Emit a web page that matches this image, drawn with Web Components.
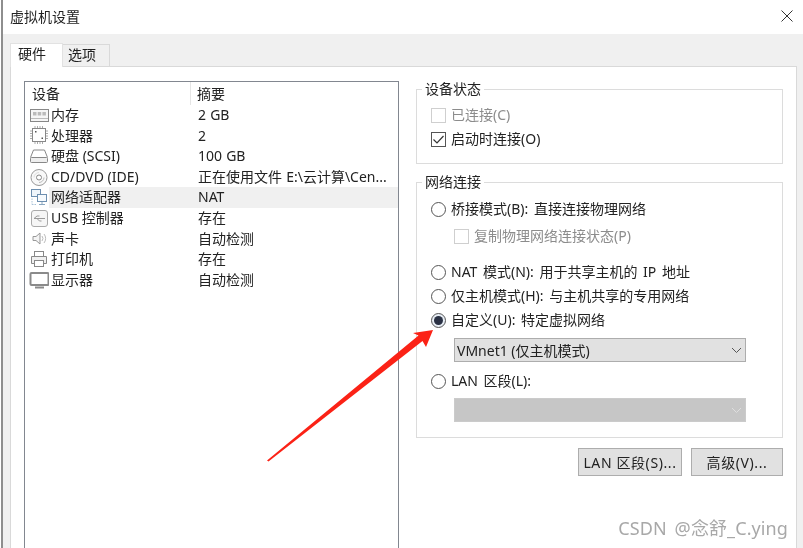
<!DOCTYPE html>
<html lang="zh">
<head>
<meta charset="utf-8">
<title>虚拟机设置</title>
<style>
    html, body { margin: 0; padding: 0; background: #fff; }
    body { font: 14px "Noto Sans", "Noto Sans CJK SC", sans-serif; color: #222; overflow: hidden; }
    .gap-3 { margin-top: 3px; }
    .gap-4 { margin-top: 4px; }
    .gap-5 { margin-top: 5px; }
    .gap-6 { margin-top: 6px; }
    .gap-7 { margin-top: 7px; }
    .gap-12 { margin-top: 12px; }
    .indent { margin-left: 23px; }
</style>
</head>
<body>
<settings-dialog heading="虚拟机设置">
    <device-list slot="left">
        <device-row icon="memory" name="内存" summary="2 GB"></device-row>
        <device-row icon="cpu" name="处理器" summary="2"></device-row>
        <device-row icon="disk" name="硬盘 (SCSI)" summary="100 GB"></device-row>
        <device-row icon="cd" name="CD/DVD (IDE)" summary="正在使用文件 E:\云计算\Cen..."></device-row>
        <device-row icon="net" name="网络适配器" summary="NAT" selected></device-row>
        <device-row icon="usb" name="USB 控制器" summary="存在"></device-row>
        <device-row icon="sound" name="声卡" summary="自动检测"></device-row>
        <device-row icon="printer" name="打印机" summary="存在"></device-row>
        <device-row icon="display" name="显示器" summary="自动检测"></device-row>
    </device-list>

    <option-group slot="right" label="设备状态" style="margin-top:8px; padding-bottom:12px">
        <option-row class="gap-3" type="check" disabled>已连接(C)</option-row>
        <option-row type="check" checked>启动时连接(O)</option-row>
    </option-group>

    <option-group slot="right" label="网络连接" style="margin-top:18px; padding-bottom:15px">
        <option-row class="gap-4" type="radio">桥接模式(B): 直接连接物理网络</option-row>
        <option-row class="gap-3 indent" type="check" disabled>复制物理网络连接状态(P)</option-row>
        <option-row class="gap-12" type="radio">NAT 模式(N): 用于共享主机的 IP 地址</option-row>
        <option-row type="radio">仅主机模式(H): 与主机共享的专用网络</option-row>
        <option-row type="radio" checked>自定义(U): 特定虚拟网络</option-row>
        <combo-box class="gap-6 indent">VMnet1 (仅主机模式)</combo-box>
        <option-row class="gap-7" type="radio">LAN 区段(L):</option-row>
        <combo-box class="gap-5 indent" disabled></combo-box>
    </option-group>

    <button-row slot="right">
        <push-button style="width:104px">LAN 区段(S)...</push-button>
        <push-button style="width:92px">高级(V)...</push-button>
    </button-row>

    <annotation-arrow slot="overlay"></annotation-arrow>
    <water-mark slot="overlay">CSDN @念舒_C.ying</water-mark>
</settings-dialog>

<script>
class SettingsDialog extends HTMLElement {
    constructor() {
        super();
        this.attachShadow({ mode: 'open' });
        this.shadowRoot.innerHTML = `
            <style>
                :host {
                    display: flex;
                    flex-direction: column;
                    position: relative;
                    width: 802px;
                    height: 548px;
                    margin-left: 1px;
                    border-left: 2px solid #8e8e8e;
                    box-sizing: border-box;
                    overflow: hidden;
                    background: #fff;
                    filter: blur(.35px);
                }
                .titlebar {
                    display: flex;
                    align-items: center;
                    justify-content: space-between;
                    height: 32px;
                    padding: 0 10px 2px 7px;
                    flex: none;
                }
                .titlebar svg { display: block; }
                .body {
                    flex: 1;
                    min-height: 0;
                    display: flex;
                    flex-direction: column;
                    background: #f0f0f0;
                    padding: 9px 6px 0 7px;
                }
                .tabs { display: flex; align-items: flex-end; height: 23px; flex: none; }
                .tab {
                    box-sizing: border-box;
                    border: 1px solid #d9d9d9;
                    border-bottom: none;
                }
                .tab.on {
                    width: 53px;
                    height: 24px;
                    line-height: 19px;
                    padding-left: 7px;
                    background: #fff;
                    margin-bottom: -1px;
                    position: relative;
                    border-color: #e2e2e2;
                }
                .tab.off {
                    width: 48px;
                    height: 22px;
                    line-height: 20px;
                    padding-left: 5px;
                    margin-left: -1px;
                    background: #f0f0f0;
                }
                .panel {
                    flex: 1;
                    min-height: 0;
                    display: flex;
                    gap: 17px;
                    padding: 14px 13px 0 13px;
                    background: #fff;
                    border: 1px solid #d9d9d9;
                    border-bottom: none;
                }
                .left { display: block; width: 375px; flex: none; }
                .right { display: flex; flex-direction: column; width: 367px; flex: none; }
            </style>
            <div class="titlebar">
                <span class="heading"></span>
                <svg width="12" height="12" viewBox="0 0 12 12"><path d="M.5.5l11 11M11.5.5l-11 11" stroke="#333" stroke-width="1" fill="none"/></svg>
            </div>
            <div class="body">
                <div class="tabs">
                    <div class="tab on">硬件</div>
                    <div class="tab off">选项</div>
                </div>
                <div class="panel">
                    <div class="left"><slot name="left"></slot></div>
                    <div class="right"><slot name="right"></slot></div>
                </div>
            </div>
            <slot name="overlay"></slot>
        `;
    }

    connectedCallback() {
        this.shadowRoot.querySelector('.heading').textContent = this.getAttribute('heading');
    }
}

class DeviceList extends HTMLElement {
    constructor() {
        super();
        this.attachShadow({ mode: 'open' });
        this.shadowRoot.innerHTML = `
            <style>
                :host {
                    display: block;
                    height: 100%;
                    box-sizing: border-box;
                    border: 1px solid #828790;
                    border-bottom: none;
                    background: #fff;
                }
                .head { display: grid; grid-template-columns: 166px 1fr; height: 23px; line-height: 23px; }
                .head span:first-child { padding-left: 7px; border-right: 1px solid #e5e5e5; }
                .head span:last-child { padding-left: 6px; }
            </style>
            <div class="head"><span>设备</span><span>摘要</span></div>
            <slot></slot>
        `;
    }
}

const DEVICE_ICONS = {
    memory: `<rect x="1.500" y="3.500" width="18" height="12" fill="#f6f6f6" stroke="#888"/><path d="M4 6h3.500v3.500H4zM8.700 6h3.500v3.500H8.700zM13.400 6h3.500v3.500h-3.500z" fill="#bbb"/><path d="M2 12.500h17" stroke="#bbb"/>`,
    cpu: `<rect x="3.500" y="2.500" width="13" height="13" fill="#fff" stroke="#888"/><path d="M6 0v2M8.500 0v2M11 0v2M13.500 0v2M6 16v2M8.500 16v2M11 16v2M13.500 16v2M1 5h2M1 7.500h2M1 10h2M1 12.500h2M17 5h2M17 7.500h2M17 10h2M17 12.500h2" stroke="#aaa"/><path d="M6 5h1.500v1.500H6zM12.500 11.500H14V13h-1.500z" fill="#555"/>`,
    disk: `<path d="M1.500 10.500l3-7.500h11l3 7.500" fill="#fff" stroke="#888"/><rect x="1.500" y="10.500" width="17" height="5" rx="1" fill="#eee" stroke="#888"/>`,
    cd: `<circle cx="10" cy="9.500" r="8" fill="#f8f8f8" stroke="#999"/><circle cx="10" cy="9.500" r="2.500" fill="#fff" stroke="#888"/><path d="M5 9.500a5 5 0 0 1 5-5" fill="none" stroke="#ddd"/><path d="M15 9.500a5 5 0 0 1-5 5" fill="none" stroke="#bbb"/>`,
    net: `<rect x="2.500" y="1.500" width="9" height="7" fill="#eef5fb" stroke="#6d8fb0"/><rect x="8.500" y="6.500" width="9" height="7" fill="#f6fafd" stroke="#6d8fb0"/><path d="M13 14v2M10 16.500h6" stroke="#8aa7c0"/><path d="M3 10.500v6M3 16.500h5" stroke="#a8c2d8" stroke-dasharray="1.500 1"/>`,
    usb: `<rect x="2.500" y="1.500" width="16" height="16" rx="2.500" fill="#f6f6f6" stroke="#aaa"/><path d="M5 9.500h11M5 9.500l3-2.500M8 9.500l2.500 2.500h2M8 7h2.500" fill="none" stroke="#999"/>`,
    sound: `<path d="M4 7.500h3l4-3.500v11l-4-3.500H4z" fill="#f4f4f4" stroke="#999"/><path d="M13 7a4 4 0 0 1 0 5M15 5a7 7 0 0 1 0 9" fill="none" stroke="#bbb"/>`,
    printer: `<rect x="5.500" y="1.500" width="9" height="5" fill="#fff" stroke="#888"/><path d="M5.500 13.500h-3v-7h15v7h-3" fill="#f0f0f0" stroke="#888"/><rect x="5.500" y="10.500" width="9" height="6" fill="#fff" stroke="#888"/>`,
    display: `<rect x="1.500" y="2" width="18" height="12" rx="1" fill="#fff" stroke="#8a8a8a" stroke-width="2"/><path d="M6 16.500h9" stroke="#8a8a8a" stroke-width="2"/>`
};

class DeviceRow extends HTMLElement {
    constructor() {
        super();
        this.attachShadow({ mode: 'open' });
        this.shadowRoot.innerHTML = `
            <style>
                :host { display: flex; height: 20.6px; line-height: 20.6px; white-space: nowrap; }
                .icon { width: 24px; flex: none; display: flex; align-items: center; padding-left: 4px; box-sizing: border-box; }
                .icon svg { display: block; }
                .text { flex: 1; display: grid; grid-template-columns: 149px 1fr; min-width: 0; }
                .name { padding-left: 2px; }
                .summary { word-spacing: .5px; }
                :host([selected]) .text { background: #f0f0f0; }
            </style>
            <div class="icon"></div>
            <div class="text"><span class="name"></span><span class="summary"></span></div>
        `;
    }

    connectedCallback() {
        const root = this.shadowRoot;
        const icon = DEVICE_ICONS[this.getAttribute('icon')];
        root.querySelector('.icon').innerHTML = `<svg width="20" height="19" viewBox="0 0 20 19">${icon}</svg>`;
        root.querySelector('.name').textContent = this.getAttribute('name');
        root.querySelector('.summary').textContent = this.getAttribute('summary');
    }
}

class OptionGroup extends HTMLElement {
    constructor() {
        super();
        this.attachShadow({ mode: 'open' });
        this.shadowRoot.innerHTML = `
            <style>
                :host {
                    display: flex;
                    flex-direction: column;
                    flex: none;
                    border: 1px solid #dcdcdc;
                    padding: 0 14px;
                }
                .label {
                    align-self: flex-start;
                    height: 20px;
                    line-height: 18px;
                    margin: -10px 0 0 -9px;
                    padding: 0 3px;
                    background: #fff;
                }
            </style>
            <div class="label"></div>
            <slot></slot>
        `;
    }

    connectedCallback() {
        this.shadowRoot.querySelector('.label').textContent = this.getAttribute('label');
    }
}

class OptionRow extends HTMLElement {
    constructor() {
        super();
        this.attachShadow({ mode: 'open' });
        this.shadowRoot.innerHTML = `
            <style>
                :host { display: flex; align-items: center; gap: 5px; height: 24px; line-height: 24px; white-space: nowrap; word-spacing: 2px; }
                :host([disabled]) { color: #8c8c8c; }
                .mark { width: 15px; height: 15px; flex: none; display: block; }
                .mark svg { display: block; }
            </style>
            <span class="mark"></span>
            <slot></slot>
        `;
    }

    connectedCallback() {
        const checked = this.hasAttribute('checked');
        const line = this.hasAttribute('disabled') ? '#cfcfcf' : '#555';
        let shape;
        if (this.getAttribute('type') === 'radio') {
            shape = `<circle cx="7.500" cy="7.500" r="7" fill="${checked ? '#e8eef5' : '#fff'}" stroke="${line}"/>`;
            if (checked) shape += `<circle cx="7.500" cy="7.500" r="4.500" fill="#2a3144"/>`;
        } else {
            shape = `<rect x=".5" y=".5" width="14" height="14" fill="#fff" stroke="${line}"/>`;
            if (checked) shape += `<path d="M2.500 7.500l3.500 3.500 6.500-7" fill="none" stroke="#333" stroke-width="1.200"/>`;
        }
        this.shadowRoot.querySelector('.mark').innerHTML =
            `<svg width="15" height="15" viewBox="0 0 15 15">${shape}</svg>`;
    }
}

class ComboBox extends HTMLElement {
    constructor() {
        super();
        this.attachShadow({ mode: 'open' });
        this.shadowRoot.innerHTML = `
            <style>
                :host {
                    display: flex;
                    align-items: center;
                    justify-content: space-between;
                    box-sizing: border-box;
                    width: 292px;
                    height: 24px;
                    padding: 0 3px 0 2px;
                    background: #e1e1e1;
                    border: 1px solid #adadad;
                    white-space: nowrap;
                }
                :host([disabled]) { background: #c6c6c6; border-color: #cbcbcb; }
                svg { flex: none; display: block; }
            </style>
            <span><slot></slot></span>
            <svg width="11" height="7" viewBox="0 0 11 7"><path d="M1 1l4.500 4.500L10 1" fill="none" stroke="#555"/></svg>
        `;
    }

    connectedCallback() {
        if (this.hasAttribute('disabled')) {
            this.shadowRoot.querySelector('path').setAttribute('stroke', '#dedede');
        }
    }
}

class ButtonRow extends HTMLElement {
    constructor() {
        super();
        this.attachShadow({ mode: 'open' });
        this.shadowRoot.innerHTML = `
            <style>
                :host { display: flex; justify-content: flex-end; gap: 9px; margin-top: 10px; flex: none; }
            </style>
            <slot></slot>
        `;
    }
}

class PushButton extends HTMLElement {
    constructor() {
        super();
        this.attachShadow({ mode: 'open' });
        this.shadowRoot.innerHTML = `
            <style>
                :host {
                    display: flex;
                    align-items: center;
                    justify-content: center;
                    box-sizing: border-box;
                    height: 28px;
                    background: #e1e1e1;
                    border: 1px solid #adadad;
                    white-space: nowrap;
                    letter-spacing: .6px;
                }
            </style>
            <slot></slot>
        `;
    }
}

class AnnotationArrow extends HTMLElement {
    constructor() {
        super();
        this.attachShadow({ mode: 'open' });
        this.shadowRoot.innerHTML = `
            <style>
                :host { position: absolute; left: -3px; top: 0; width: 803px; height: 548px; pointer-events: none; }
                svg { display: block; }
            </style>
            <svg width="803" height="548" viewBox="0 0 803 548">
                <polygon fill="#fb2216" points="267,460.500 418.500,335.500 413,333 433,330 426,347 422.500,341 268.500,461.500"/>
            </svg>
        `;
    }
}

class WaterMark extends HTMLElement {
    constructor() {
        super();
        this.attachShadow({ mode: 'open' });
        this.shadowRoot.innerHTML = `
            <style>
                :host {
                    position: absolute;
                    right: 15px;
                    top: 516px;
                    font-size: 18px;
                    line-height: 24px;
                    word-spacing: 3px;
                    letter-spacing: .1px;
                    color: #a8a8a8;
                    white-space: nowrap;
                }
            </style>
            <slot></slot>
        `;
    }
}

customElements.define('settings-dialog', SettingsDialog);
customElements.define('device-list', DeviceList);
customElements.define('device-row', DeviceRow);
customElements.define('option-group', OptionGroup);
customElements.define('option-row', OptionRow);
customElements.define('combo-box', ComboBox);
customElements.define('button-row', ButtonRow);
customElements.define('push-button', PushButton);
customElements.define('annotation-arrow', AnnotationArrow);
customElements.define('water-mark', WaterMark);
</script>
</body>
</html>
